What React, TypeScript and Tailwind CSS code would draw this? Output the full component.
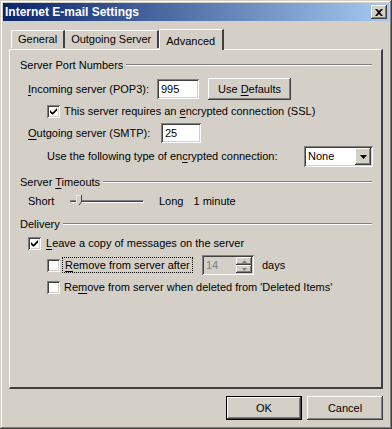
import React from 'react'

const font = "font-['Liberation_Sans',Arial,sans-serif]"
const raised =
  'bg-[#d4d0c8] shadow-[inset_-1px_-1px_#404040,inset_1px_1px_#ffffff,inset_-2px_-2px_#808080,inset_2px_2px_#d4d0c8]'
const sunken =
  'shadow-[inset_1px_1px_#808080,inset_-1px_-1px_#ffffff,inset_2px_2px_#404040,inset_-2px_-2px_#d4d0c8]'

const U: React.FC<{ children: React.ReactNode }> = ({ children }) => <span className="underline underline-offset-2">{children}</span>

const Check: React.FC<{ checked?: boolean }> = ({ checked }) => (
  <span className={`w-[13px] h-[13px] bg-white ${sunken} flex items-center justify-center shrink-0`}>
    {checked && (
      <svg width="7" height="7" viewBox="0 0 7 7">
        <path d="M0 2 L0 4.5 L2 6.5 L3 6.5 L7 2.5 L7 0 L2.5 4.5 Z" fill="#000" />
      </svg>
    )}
  </span>
)

const GroupHead: React.FC<{ children: React.ReactNode }> = ({ children }) => (
  <div className="h-[14px] flex items-center pl-[10px] pr-[9px]">
    <span className="whitespace-nowrap">{children}</span>
    <span className="flex-1 ml-[3px] border-t border-t-[#808080] border-b border-b-white" />
  </div>
)

const Arrow: React.FC<{ up?: boolean; size?: number }> = ({ up, size = 7 }) => (
  <svg width={size} height={Math.ceil(size / 2)} viewBox="0 0 7 4">
    <path d={up ? 'M3.5 0 L7 4 L0 4 Z' : 'M0 0 L7 0 L3.5 4 Z'} fill="currentColor" />
  </svg>
)

export default function App() {
  return (
    <div
      className={`${font} text-[11px] text-black w-[392px] h-[429px] bg-[#d4d0c8] flex flex-col p-[3px] shadow-[inset_-1px_-1px_#404040,inset_1px_1px_#d4d0c8,inset_-2px_-2px_#808080,inset_2px_2px_#ffffff]`}
    >
      {/* title bar */}
      <div className="h-[18px] flex items-center pl-[2px] pr-[2px] bg-[linear-gradient(to_right,#0a246a,#a6caf0)]">
        <span className="flex-1 text-white font-bold text-[12px]">Internet E-mail Settings</span>
        <span className={`w-[16px] h-[14px] ${raised} flex items-center justify-center`}>
          <svg width="8" height="7" viewBox="0 0 8 7">
            <path d="M0 0 H2 L4 2 L6 0 H8 L5 3.5 L8 7 H6 L4 5 L2 7 H0 L3 3.5 Z" fill="#000" />
          </svg>
        </span>
      </div>

      {/* tabs */}
      <div className="mt-[6px] h-[22px] flex items-end pl-[8px] relative z-10">
        <div className="h-[18px] px-[6px] flex items-center border-t border-l border-white border-r-2 border-r-[#404040] rounded-tl-[2px] mb-[1px]">
          General
        </div>
        <div className="h-[18px] px-[6px] flex items-center border-t border-white border-r-2 border-r-[#404040] mb-[1px]">
          Outgoing Server
        </div>
        <div className="h-[21px] w-[65px] -mb-[1px] pl-[6px] pt-[1px] flex items-start bg-[#d4d0c8] border-t border-l border-white border-r-2 border-r-[#404040] rounded-tl-[2px]">
          <span className="mt-[2px]">Advanced</span>
        </div>
      </div>

      {/* panel */}
      <div className="ml-[6px] mr-[6px] h-[340px] border-t border-l border-white border-r-2 border-b-2 border-r-[#404040] border-b-[#404040] pt-[8px] flex flex-col">
        <GroupHead>Server Port Numbers</GroupHead>

        <div className="mt-[6px] h-[22px] flex items-center pl-[18px]">
          <span className="w-[129px]">
            <U>I</U>ncoming server (POP3):
          </span>
          <span className={`w-[42px] h-[20px] bg-white ${sunken} flex items-center pl-[4px]`}>995</span>
          <span className={`ml-[9px] w-[83px] h-[22px] ${raised} flex items-center justify-center`}>
            Use&nbsp;<U>D</U>efaults
          </span>
        </div>

        <div className="mt-[4px] h-[14px] flex items-center pl-[37px] gap-[4px]">
          <Check checked />
          <span>
            This server requires an <U>e</U>ncrypted connection (SSL)
          </span>
        </div>

        <div className="mt-[5px] h-[20px] flex items-center pl-[18px]">
          <span className="w-[133px]">
            <U>O</U>utgoing server (SMTP):
          </span>
          <span className={`w-[40px] h-[20px] bg-white ${sunken} flex items-center pl-[4px]`}>25</span>
        </div>

        <div className="mt-[3px] h-[21px] flex items-center pl-[37px]">
          <span className="w-[257px]">
            Use the following type of en<U>c</U>rypted connection:
          </span>
          <span className={`w-[69px] h-[21px] bg-white ${sunken} flex items-center pl-[4px] pr-[2px]`}>
            <span className="flex-1">None</span>
            <span className={`w-[16px] h-[17px] ${raised} flex items-center justify-center`}>
              <Arrow />
            </span>
          </span>
        </div>

        <div className="mt-[8px]">
          <GroupHead>
            Server <U>T</U>imeouts
          </GroupHead>
        </div>

        <div className="mt-[4px] h-[16px] flex items-center pl-[18px]">
          <span className="w-[42px]">Short</span>
          <span className="relative w-[74px] h-[16px] flex items-center">
            <span className="w-full h-[3px] border-t border-l border-[#808080] border-b border-r border-b-white border-r-white bg-[#404040]" />
            <svg className="absolute left-[6px] top-[2px]" width="6" height="11" viewBox="0 0 6 11">
              <path d="M0 0 H6 V7 L3 10 L0 7 Z" fill="#d4d0c8" />
              <path d="M0 7 V0 H5" stroke="#fff" strokeWidth="1" fill="none" />
              <path d="M5.5 0 V7 L3 10" stroke="#404040" strokeWidth="1" fill="none" />
            </svg>
          </span>
          <span className="ml-[15px]">Long</span>
          <span className="ml-[10px]">1 minute</span>
        </div>

        <div className="mt-[8px]">
          <GroupHead>Delivery</GroupHead>
        </div>

        <div className="mt-[5px] h-[14px] flex items-center pl-[18px] gap-[5px]">
          <Check checked />
          <span>
            <U>L</U>eave a copy of messages on the server
          </span>
        </div>

        <div className="mt-[5px] h-[20px] flex items-center pl-[37px]">
          <Check />
          <span className="ml-[2px] px-[2px] h-[16px] flex items-center border border-dotted border-black w-[131px]">
            <U>R</U>emove from server after
          </span>
          <span className={`ml-[9px] w-[52px] h-[20px] ${sunken} flex items-center pl-[4px] pr-[2px] text-[#808080]`}>
            <span className="flex-1">14</span>
            <span className="w-[16px] h-[16px] flex flex-col">
              <span className={`h-[8px] ${raised} flex items-center justify-center text-[#808080]`}>
                <Arrow up size={5} />
              </span>
              <span className={`h-[8px] ${raised} flex items-center justify-center text-[#808080]`}>
                <Arrow size={5} />
              </span>
            </span>
          </span>
          <span className="ml-[8px]">days</span>
        </div>

        <div className="mt-[5px] h-[14px] flex items-center pl-[37px] gap-[4px]">
          <Check />
          <span>
            Re<U>m</U>ove from server when deleted from 'Deleted Items'
          </span>
        </div>
      </div>

      {/* buttons */}
      <div className="mt-[7px] flex justify-end gap-[5px] pr-[6px]">
        <span className="w-[76px] h-[24px] border border-black flex">
          <span className={`flex-1 ${raised} flex items-center justify-center`}>OK</span>
        </span>
        <span className={`w-[76px] h-[24px] ${raised} flex items-center justify-center`}>Cancel</span>
      </div>
    </div>
  )
}
